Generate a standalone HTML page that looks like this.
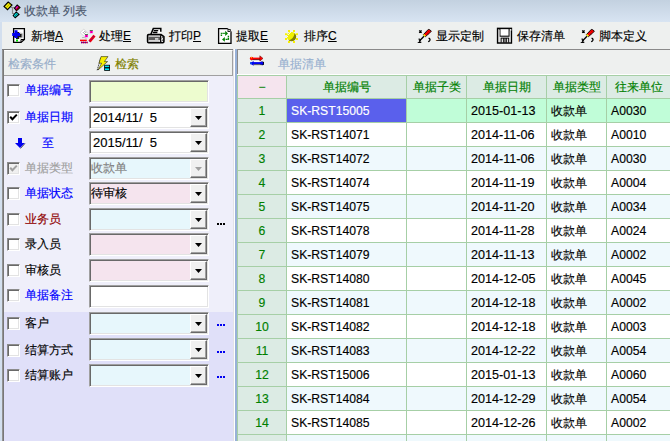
<!DOCTYPE html><html><head><meta charset="utf-8"><style>
*{margin:0;padding:0;box-sizing:border-box}
html,body{width:670px;height:441px;overflow:hidden;background:#F0F0F0;font-family:"Liberation Sans",sans-serif;font-size:12px;color:#000;font-weight:500;-webkit-text-stroke:0.15px currentColor}
.a{position:absolute;white-space:nowrap}
#title{left:0;top:0;width:670px;height:22px;background:linear-gradient(#C3D1E0,#D8E4F2)}
#title .t{left:24px;top:3px;font-size:12.4px;color:#4A566C;line-height:16px}
#frameL{left:0;top:22px;width:2px;height:419px;background:#D3DFEE}
#tb{left:2px;top:22px;width:668px;height:27px;background:#EEF0EF}
.tbt{top:29px;line-height:14px;font-size:12px;color:#000;font-weight:500;-webkit-text-stroke:0.15px currentColor}
.u{text-decoration:underline}
#lp{left:2px;top:49px;width:233px;height:392px;background:#EFEFFA}
#lpl{left:2px;top:49px;width:2px;height:392px;background:linear-gradient(90deg,#A0A0A0,#6A6A6A)}
#lpt{left:2px;top:49px;width:233px;height:1px;background:#7A7A7A}
#lhdr{left:4px;top:50px;width:229px;height:26px;background:#EEF0EF;border-top:1px solid #FFF;border-right:1px solid #A0A0A0;border-bottom:1px solid #A0A0A0}
#lower{left:4px;top:312px;width:229px;height:129px;background:#E0E0F9}
#split{left:235px;top:49px;width:2px;height:392px;background:#98B1D8}
#splitw{left:233px;top:49px;width:2px;height:392px;background:linear-gradient(90deg,#E2E2E8 50%,#FFF 50%)}
#rp{left:237px;top:49px;width:433px;height:392px;background:#EEF0EF}
#rpt{left:237px;top:49px;width:433px;height:1px;background:#8A8A8A}
#rpl{left:237px;top:49px;width:1px;height:25px;background:#8A8A8A}
#rpw{left:237px;top:74px;width:433px;height:1px;background:#FFF}
.lbl{left:25px;line-height:14px;font-size:12px}
.cb{left:7px;width:13px;height:13px;background:#FFF;border:1px solid;border-color:#8C8C8C #FFF #FFF #8C8C8C;box-shadow:inset 1px 1px 0 #696969,inset -1px -1px 0 #E3E3E3}
.box{left:89px;width:120px;height:23px;border:1px solid;border-color:#A0A0A0 #FFF #FFF #A0A0A0;box-shadow:inset 1px 1px 0 #696969,inset -1px -1px 0 #E3E3E3}
.box .v{position:absolute;left:3px;top:4px;line-height:14px;font-size:13px}
.box .v.c{left:1px;top:3px;font-size:12px}
.dd{position:absolute;right:1px;top:1px;width:17px;height:19px;background:#F0F0F0;border:1px solid;border-color:#FFF #696969 #696969 #FFF;box-shadow:inset -1px -1px 0 #A0A0A0}
.dd:after{content:"";position:absolute;left:4px;top:7px;width:7px;height:4px;background:#000;clip-path:polygon(0 0,100% 0,50% 100%)}
.dd.dis:after{background:#A0A0A0}
.dots{left:217px;width:9px;height:2px}
.dots i{position:absolute;top:0;width:2px;height:2px;background:#0000E0}
.g{position:absolute;background:#A6CFA6}
.cell{position:absolute;line-height:14px;font-size:12.2px;white-space:nowrap}
</style></head><body><div class="a" id="title"><div class="a t">收款单 列表</div></div>
<svg class="a" style="left:0;top:0" width="22" height="21" viewBox="0 0 22 21">
<path d="M10.5 7.5 H14.5 M12.5 7.5 V13.5 H14" fill="none" stroke="#8A8A8A" stroke-width="1.2"/>
<path d="M4 6.5 L8.2 2 L12 5 L7.5 9.7 Z" fill="#F8F000" stroke="#000" stroke-width="1.1"/>
<path d="M6 8 L10 3.6" stroke="#A8A000" stroke-width="1"/>
<path d="M14.5 8.2 L17.2 5 L20 7.5 L16.5 10.7 Z" fill="#F000D0" stroke="#000" stroke-width="1.1"/>
<path d="M16 10 L19 7" stroke="#900000" stroke-width="1.3"/>
<path d="M13.2 15.5 L16.2 12 L19 14.5 L15.2 17.7 Z" fill="#00E8E8" stroke="#000" stroke-width="1.1"/>
<path d="M14.5 16.5 L17.5 13.5" stroke="#008080" stroke-width="1"/>
</svg>
<div class="a" id="frameL"></div>
<div class="a" id="tb"></div>
<div class="a tbt" style="left:31px">新增<span class="u">A</span></div>
<div class="a tbt" style="left:99px">处理<span class="u">E</span></div>
<div class="a tbt" style="left:169px">打印<span class="u">P</span></div>
<div class="a tbt" style="left:236px">提取<span class="u">E</span></div>
<div class="a tbt" style="left:304px">排序<span class="u">C</span></div>
<div class="a tbt" style="left:436px">显示定制</div>
<div class="a tbt" style="left:517px">保存清单</div>
<div class="a tbt" style="left:599px">脚本定义</div>
<svg class="a" style="left:10px;top:27px" width="17" height="17" viewBox="0 0 17 17">
<path d="M3.6 1.6 H14.4 V12.5 L11 15.4 H3.6 Z" fill="#FFF" stroke="#000" stroke-width="1.3"/>
<path d="M11 15.4 V12.5 H14.4" fill="none" stroke="#000" stroke-width="1"/>
<path d="M10 6.5 Q12.5 6.5 12.5 8.5 Q12.5 10.5 10 10.5" fill="none" stroke="#C0C0C0" stroke-width="1.8"/>
<path d="M3 8 H11 M7 4.5 V11.5" stroke="#000" stroke-width="3.2" opacity="0.9" transform="translate(0.6,0.6)"/>
<path d="M2.2 7.5 H10 M6 3.2 V11" stroke="#0000F0" stroke-width="3"/>
<rect x="6" y="12.5" width="2" height="2" fill="#00E000"/>
</svg>
<svg class="a" style="left:79px;top:28px" width="18" height="17" viewBox="0 0 18 17">
<path d="M1 4.5 L4.8 1.2 L9.3 5.3 L5.5 8.7 Z" fill="#FFF" stroke="#D0D0D0" stroke-width="0.8"/>
<path d="M3.8 4 L5.8 6 M5.3 3 L7.3 5" stroke="#9A9A9A" stroke-width="0.9"/>
<path d="M3 9.6 Q5 9 7.5 10.3" fill="none" stroke="#B8B8B8" stroke-width="1"/>
<rect x="10.8" y="2.8" width="3" height="2.4" fill="#FF00E8"/><rect x="10.8" y="2" width="3" height="1" fill="#507050"/>
<rect x="11.8" y="3.5" width="1" height="1" fill="#E00000"/>
<rect x="5.9" y="6.8" width="3" height="2.4" fill="#FF00E8"/><rect x="5.9" y="6" width="3" height="1" fill="#507050"/>
<rect x="6.9" y="7.5" width="1" height="1" fill="#E00000"/>
<path d="M1 12.4 H7.8" stroke="#FF0000" stroke-width="1.5"/>
<path d="M2 14.5 H8.6" stroke="#E00030" stroke-width="1.4"/>
<path d="M2 14.5 H8.6" stroke="#5000A0" stroke-width="1.4" stroke-dasharray="1 1"/>
<path d="M10.5 13.5 L15.5 7.6" stroke="#FF0000" stroke-width="2.8"/>
<path d="M10.5 13.5 L15.5 7.6" stroke="#6000A0" stroke-width="1.2" stroke-dasharray="1 1"/>
</svg>
<svg class="a" style="left:146px;top:27px" width="20" height="18" viewBox="0 0 20 18">
<path d="M7.4 1.6 H14.8 V7 H5 Z" fill="#FFF"/>
<path d="M4.9 7.2 L7.3 1.6 H14.8 V4.8" fill="none" stroke="#000" stroke-width="1.5"/>
<path d="M7.7 3.6 H12.2 M6.9 5.5 H11.4" stroke="#000" stroke-width="1.4"/>
<path d="M2.6 7.6 H15 L17.9 9.6 V14.6 Q17.9 15.8 16.8 15.8 H2.6 Q1.6 15.8 1.6 14.6 V8.6 Q1.6 7.6 2.6 7.6 Z" fill="#E8E8E8" stroke="#000" stroke-width="1.6"/>
<rect x="2.4" y="9.8" width="12" height="3.2" fill="#5A5A5A"/>
<path d="M2.8 8.9 H13.5 M2.8 14.2 H13.5" stroke="#A8A8A8" stroke-width="0.9"/>
<rect x="9" y="11.3" width="3.4" height="1.3" fill="#FFF"/>
<path d="M14.6 8.2 V15.2" stroke="#000" stroke-width="1.1"/>
<path d="M15.4 11.2 L17.2 9.6 M15.4 14.2 L17.2 12.6" stroke="#303030" stroke-width="1"/>
</svg>
<svg class="a" style="left:217px;top:27px" width="16" height="18" viewBox="0 0 16 18">
<path d="M1.6 1.6 H10.6 L14 4.8 V16.4 H1.6 Z" fill="#FFF" stroke="#000" stroke-width="1.3"/>
<path d="M10.8 1.6 L14 4.8" stroke="#FFF" stroke-width="1.2"/>
<rect x="11" y="2.4" width="2.2" height="2.2" fill="#FFF" stroke="#000" stroke-width="0.8"/>
<path d="M4.4 9 V6.4 H8.6" fill="none" stroke="#008000" stroke-width="1.4" stroke-dasharray="1.6 0.6"/>
<path d="M8.2 3.8 L11 6.4 L8.2 9 Z" fill="#008000"/>
<path d="M11.4 8.8 V12.4 H7.4" fill="none" stroke="#008000" stroke-width="1.4" stroke-dasharray="1.6 0.6"/>
<path d="M7.8 10 L5 12.4 L7.8 14.8 Z" fill="#008000"/>
</svg>
<svg class="a" style="left:284px;top:28px" width="16" height="16" viewBox="0 0 16 16">
<g fill="#F8F000"><rect x="4" y="2" width="2" height="2"/><rect x="9" y="2" width="2" height="2"/><rect x="1" y="5.3" width="2" height="1.8"/><rect x="12" y="5.3" width="2" height="1.8"/><rect x="1" y="10" width="2" height="2"/><rect x="12" y="10" width="2" height="2"/><rect x="4" y="13" width="2" height="2"/><rect x="9" y="13" width="2" height="2"/></g>
<circle cx="7.5" cy="8.5" r="4.6" fill="#F0F000"/>
<path d="M10.6 5.2 A4.6 4.6 0 0 1 4.6 12.2 Q9.5 11.5 10.6 5.2 Z" fill="#808000"/>
<g fill="#FFFFFF" opacity="0.8"><rect x="4" y="6" width="1" height="1"/><rect x="5" y="5" width="1" height="1"/><rect x="6" y="4" width="1" height="1"/><rect x="3" y="8" width="1" height="1"/></g>
</svg>
<svg class="a" style="left:417px;top:28px" width="16" height="16" viewBox="0 0 16 16">
<path d="M7 8.2 L2.2 13.2" stroke="#000" stroke-width="1.3"/>
<path d="M1.5 11.2 Q3 10.8 3.3 12 Q3.2 13.5 1.8 14.5 Q3.5 14.6 4.3 13.8" fill="none" stroke="#000" stroke-width="1.1"/>
<path d="M6.4 6.6 L11.3 1.4 Q12.8 1.2 14.4 3.3 L8.3 8.8 Z" fill="#FF0000" stroke="#000" stroke-width="0.9"/>
<path d="M9.5 4.5 L11.6 6.2 M11 3 L13 4.7" stroke="#B00000" stroke-width="0.7"/>
<path d="M6.6 6.4 L8.4 8.3" stroke="#F0F000" stroke-width="1.5"/>
<path d="M2.2 2.5 L4.6 4.7 M4.6 2.5 L2.2 4.7" stroke="#000" stroke-width="1.3"/>
<path d="M11.6 10.2 Q13.6 11 12.8 12.3 Q12.2 13.2 11.2 13.8" fill="none" stroke="#000" stroke-width="1.3"/>
</svg>
<svg class="a" style="left:496px;top:27px" width="17" height="17" viewBox="0 0 17 17">
<rect x="1.6" y="1.4" width="13.8" height="14.6" fill="#FFF" stroke="#000" stroke-width="1.5"/>
<rect x="3.9" y="1.6" width="9.2" height="7.6" fill="#FFF" stroke="#000" stroke-width="1.1"/>
<rect x="4.6" y="10.6" width="8.6" height="5" fill="#000"/>
<rect x="5.6" y="11.6" width="1.6" height="3.6" fill="#E0E0E0"/><rect x="8.2" y="11.6" width="1.6" height="3.6" fill="#909090"/><rect x="10.8" y="11.6" width="1.4" height="3.6" fill="#E0E0E0"/>
<rect x="2.6" y="3" width="1" height="12" fill="#C8C8C8"/><rect x="13.8" y="4.2" width="1" height="11" fill="#C8C8C8"/>
<rect x="14" y="2.2" width="1.4" height="1.4" fill="#FFF"/>
</svg>
<svg class="a" style="left:580px;top:28px" width="16" height="16" viewBox="0 0 16 16">
<path d="M7 8.2 L2.2 13.2" stroke="#000" stroke-width="1.3"/>
<path d="M1.5 11.2 Q3 10.8 3.3 12 Q3.2 13.5 1.8 14.5 Q3.5 14.6 4.3 13.8" fill="none" stroke="#000" stroke-width="1.1"/>
<path d="M6.4 6.6 L11.3 1.4 Q12.8 1.2 14.4 3.3 L8.3 8.8 Z" fill="#FF0000" stroke="#000" stroke-width="0.9"/>
<path d="M9.5 4.5 L11.6 6.2 M11 3 L13 4.7" stroke="#B00000" stroke-width="0.7"/>
<path d="M6.6 6.4 L8.4 8.3" stroke="#F0F000" stroke-width="1.5"/>
<path d="M2.2 2.5 L4.6 4.7 M4.6 2.5 L2.2 4.7" stroke="#000" stroke-width="1.3"/>
<path d="M11.6 10.2 Q13.6 11 12.8 12.3 Q12.2 13.2 11.2 13.8" fill="none" stroke="#000" stroke-width="1.3"/>
</svg>
<div class="a" id="lp"></div>
<div class="a" id="lower"></div>
<div class="a" id="lpl"></div>
<div class="a" id="lpt"></div>
<div class="a" id="lhdr"></div>
<div class="a" style="left:8px;top:57px;line-height:14px;color:#98AECA">检索条件</div>
<svg class="a" style="left:96px;top:56px" width="14" height="15" viewBox="0 0 14 15">
<path d="M1.2 14.2 L4.6 2" stroke="#000" stroke-width="1" stroke-dasharray="1 1"/>
<path d="M5 0.6 H12 L8.4 5.6 H11.6 L2 14 L5.6 7.2 H3 Z" fill="#F8F000" stroke="#000" stroke-width="0.5"/>
<rect x="8.6" y="9.2" width="5" height="2.4" fill="#00E8F8" stroke="#000" stroke-width="0.8"/>
<rect x="8.6" y="12" width="5" height="2.4" fill="#00E8F8" stroke="#000" stroke-width="0.8"/>
</svg>
<div class="a" style="left:115px;top:57px;line-height:14px;color:#808000">检索</div>
<div class="a" id="splitw"></div>
<div class="a" id="split"></div>
<div class="a lbl" style="left:25px;top:83px;color:#0000FF">单据编号</div>
<div class="a cb" style="top:84px;background:#FFF"></div>
<div class="a box" style="top:80px;background:#EDFCCF"></div>
<div class="a lbl" style="left:25px;top:110px;color:#0000FF">单据日期</div>
<div class="a cb" style="top:111px;background:#FFF"><svg style="position:absolute;left:1px;top:1px" width="9" height="9" viewBox="0 0 9 9"><path d="M1.2 3.8 L3.4 6.2 L7.8 1.6" fill="none" stroke="#000" stroke-width="2"/></svg></div>
<div class="a box" style="top:106px;background:#FFFFFF"><div class="v" style="color:#000">2014/11/&nbsp; 5</div><div class="dd"></div></div>
<div class="a lbl" style="left:42px;top:136px;color:#0000FF">至</div>
<svg class="a" style="left:15px;top:137px" width="11" height="12" viewBox="0 0 11 12"><path d="M3 1 H7 V6 H10 L5 11 L0 6 H3 Z" fill="#0000F0"/><path d="M10 6.5 L5.5 11.5" stroke="#606060" stroke-width="1"/></svg>
<div class="a box" style="top:131px;background:#FFFFFF"><div class="v" style="color:#000">2015/11/&nbsp; 5</div><div class="dd"></div></div>
<div class="a lbl" style="left:25px;top:161px;color:#A0A0A0">单据类型</div>
<div class="a cb" style="top:162px;background:#F0F0F0"><svg style="position:absolute;left:1px;top:1px" width="9" height="9" viewBox="0 0 9 9"><path d="M1.2 3.8 L3.4 6.2 L7.8 1.6" fill="none" stroke="#A0A0A0" stroke-width="2"/></svg></div>
<div class="a box" style="top:157px;background:#E7F7FC"><div class="v c" style="color:#808080">收款单</div><div class="dd dis"></div></div>
<div class="a lbl" style="left:25px;top:186px;color:#0000FF">单据状态</div>
<div class="a cb" style="top:187px;background:#FFF"></div>
<div class="a box" style="top:182px;background:#F5E4EE"><div class="v c" style="color:#000">待审核</div><div class="dd"></div></div>
<div class="a lbl" style="left:25px;top:212px;color:#900000">业务员</div>
<div class="a cb" style="top:213px;background:#FFF"></div>
<div class="a box" style="top:208px;background:#E7F7FC"><div class="dd"></div></div>
<div class="a dots" style="top:223px"><i style="left:0;background:#000000"></i><i style="left:3px;background:#000000"></i><i style="left:6px;background:#000000"></i></div>
<div class="a lbl" style="left:25px;top:237px;color:#000000">录入员</div>
<div class="a cb" style="top:238px;background:#FFF"></div>
<div class="a box" style="top:233px;background:#F5E4EE"><div class="dd"></div></div>
<div class="a lbl" style="left:25px;top:263px;color:#000000">审核员</div>
<div class="a cb" style="top:264px;background:#FFF"></div>
<div class="a box" style="top:259px;background:#F5E4EE"><div class="dd"></div></div>
<div class="a lbl" style="left:25px;top:288px;color:#0000FF">单据备注</div>
<div class="a cb" style="top:289px;background:#FFF"></div>
<div class="a box" style="top:285px;background:#FFFFFF"></div>
<div class="a lbl" style="left:25px;top:316px;color:#000000">客户</div>
<div class="a cb" style="top:317px;background:#FFF"></div>
<div class="a box" style="top:312px;background:#E7F7FC"><div class="dd"></div></div>
<div class="a dots" style="top:324px"><i style="left:0;background:#0000F0"></i><i style="left:3px;background:#0000F0"></i><i style="left:6px;background:#0000F0"></i></div>
<div class="a lbl" style="left:25px;top:343px;color:#000000">结算方式</div>
<div class="a cb" style="top:344px;background:#FFF"></div>
<div class="a box" style="top:338px;background:#E7F7FC"><div class="dd"></div></div>
<div class="a dots" style="top:351px"><i style="left:0;background:#0000F0"></i><i style="left:3px;background:#0000F0"></i><i style="left:6px;background:#0000F0"></i></div>
<div class="a lbl" style="left:25px;top:368px;color:#000000">结算账户</div>
<div class="a cb" style="top:369px;background:#FFF"></div>
<div class="a box" style="top:364px;background:#E7F7FC"><div class="dd"></div></div>
<div class="a dots" style="top:376px"><i style="left:0;background:#0000F0"></i><i style="left:3px;background:#0000F0"></i><i style="left:6px;background:#0000F0"></i></div>
<div class="a" id="rp"></div>
<div class="a" id="rpt"></div>
<div class="a" id="rpl"></div>
<div class="a" id="rpw"></div>
<svg class="a" style="left:249px;top:55px" width="15" height="12" viewBox="0 0 15 12">
<rect x="2" y="4.2" width="10" height="1.2" fill="#000"/>
<rect x="2.5" y="5.3" width="9" height="1.4" fill="#FFF"/>
<rect x="1.2" y="2.6" width="11" height="1.8" fill="#FF0000"/>
<circle cx="2.6" cy="3.4" r="1.7" fill="#FF0000"/>
<rect x="2" y="2.2" width="1" height="1" fill="#F0F000"/>
<path d="M10.8 0.8 L14 3.4 L10.8 6 Z" fill="#FF0000" stroke="#600000" stroke-width="0.5"/>
<circle cx="13.4" cy="8.4" r="1.9" fill="#000"/>
<rect x="1.2" y="7.1" width="12" height="2.2" fill="#0000F0"/>
<circle cx="12.4" cy="8.2" r="1.8" fill="#0000F0"/>
<path d="M4.6 5.9 L1 8.2 L4.6 10.8 Z" fill="#0000F0"/>
<rect x="1.6" y="7.6" width="1" height="1" fill="#00E0F0"/>
<rect x="4.5" y="9.3" width="8" height="0.8" fill="#404040"/>
</svg>
<div class="a" style="left:278px;top:57px;line-height:14px;color:#98B0D0">单据清单</div>
<div class="a" style="left:238px;top:76px;width:432px;height:22px;background:#DCEBE4"></div>
<div class="a" style="left:238px;top:76px;width:48px;height:22px;background:#F5E4EE"></div>
<div class="a" style="left:238px;top:80px;width:48px;text-align:center;line-height:14px;color:#008000">−</div>
<div class="a" style="left:287px;top:80px;width:119px;text-align:center;line-height:14px;color:#008000">单据编号</div>
<div class="a" style="left:407px;top:80px;width:59px;text-align:center;line-height:14px;color:#008000">单据子类</div>
<div class="a" style="left:467px;top:80px;width:79px;text-align:center;line-height:14px;color:#008000">单据日期</div>
<div class="a" style="left:547px;top:80px;width:59px;text-align:center;line-height:14px;color:#008000">单据类型</div>
<div class="a" style="left:615px;top:80px;line-height:14px;color:#008000">往来单位</div>
<div class="a" style="left:238px;top:99px;width:48px;height:23px;background:#DCEBE4"></div>
<div class="a" style="left:287px;top:99px;width:383px;height:23px;background:#C0FDD8"></div>
<div class="a" style="left:287px;top:99px;width:119px;height:23px;background:#5A60EC"></div>
<div class="a cell" style="left:238px;top:104px;width:48px;text-align:center;color:#008000">1</div>
<div class="a cell" style="left:291px;top:104px;color:#FFF">SK-RST15005</div>
<div class="a cell" style="left:471px;top:104px;font-size:12.6px">2015-01-13</div>
<div class="a cell" style="left:551px;top:104px;font-size:12px">收款单</div>
<div class="a cell" style="left:611px;top:104px">A0030</div>
<div class="a" style="left:238px;top:123px;width:48px;height:23px;background:#DCEBE4"></div>
<div class="a" style="left:287px;top:123px;width:383px;height:23px;background:#FFFFFF"></div>
<div class="a cell" style="left:238px;top:128px;width:48px;text-align:center;color:#008000">2</div>
<div class="a cell" style="left:291px;top:128px;color:#000">SK-RST14071</div>
<div class="a cell" style="left:471px;top:128px;font-size:12.6px">2014-11-06</div>
<div class="a cell" style="left:551px;top:128px;font-size:12px">收款单</div>
<div class="a cell" style="left:611px;top:128px">A0010</div>
<div class="a" style="left:238px;top:147px;width:48px;height:23px;background:#DCEBE4"></div>
<div class="a" style="left:287px;top:147px;width:383px;height:23px;background:#EFF9FD"></div>
<div class="a cell" style="left:238px;top:152px;width:48px;text-align:center;color:#008000">3</div>
<div class="a cell" style="left:291px;top:152px;color:#000">SK-RST14072</div>
<div class="a cell" style="left:471px;top:152px;font-size:12.6px">2014-11-06</div>
<div class="a cell" style="left:551px;top:152px;font-size:12px">收款单</div>
<div class="a cell" style="left:611px;top:152px">A0030</div>
<div class="a" style="left:238px;top:171px;width:48px;height:23px;background:#DCEBE4"></div>
<div class="a" style="left:287px;top:171px;width:383px;height:23px;background:#FFFFFF"></div>
<div class="a cell" style="left:238px;top:176px;width:48px;text-align:center;color:#008000">4</div>
<div class="a cell" style="left:291px;top:176px;color:#000">SK-RST14074</div>
<div class="a cell" style="left:471px;top:176px;font-size:12.6px">2014-11-19</div>
<div class="a cell" style="left:551px;top:176px;font-size:12px">收款单</div>
<div class="a cell" style="left:611px;top:176px">A0004</div>
<div class="a" style="left:238px;top:195px;width:48px;height:23px;background:#DCEBE4"></div>
<div class="a" style="left:287px;top:195px;width:383px;height:23px;background:#EFF9FD"></div>
<div class="a cell" style="left:238px;top:200px;width:48px;text-align:center;color:#008000">5</div>
<div class="a cell" style="left:291px;top:200px;color:#000">SK-RST14075</div>
<div class="a cell" style="left:471px;top:200px;font-size:12.6px">2014-11-20</div>
<div class="a cell" style="left:551px;top:200px;font-size:12px">收款单</div>
<div class="a cell" style="left:611px;top:200px">A0034</div>
<div class="a" style="left:238px;top:219px;width:48px;height:23px;background:#DCEBE4"></div>
<div class="a" style="left:287px;top:219px;width:383px;height:23px;background:#FFFFFF"></div>
<div class="a cell" style="left:238px;top:224px;width:48px;text-align:center;color:#008000">6</div>
<div class="a cell" style="left:291px;top:224px;color:#000">SK-RST14078</div>
<div class="a cell" style="left:471px;top:224px;font-size:12.6px">2014-11-28</div>
<div class="a cell" style="left:551px;top:224px;font-size:12px">收款单</div>
<div class="a cell" style="left:611px;top:224px">A0024</div>
<div class="a" style="left:238px;top:243px;width:48px;height:23px;background:#DCEBE4"></div>
<div class="a" style="left:287px;top:243px;width:383px;height:23px;background:#EFF9FD"></div>
<div class="a cell" style="left:238px;top:248px;width:48px;text-align:center;color:#008000">7</div>
<div class="a cell" style="left:291px;top:248px;color:#000">SK-RST14079</div>
<div class="a cell" style="left:471px;top:248px;font-size:12.6px">2014-11-13</div>
<div class="a cell" style="left:551px;top:248px;font-size:12px">收款单</div>
<div class="a cell" style="left:611px;top:248px">A0002</div>
<div class="a" style="left:238px;top:267px;width:48px;height:23px;background:#DCEBE4"></div>
<div class="a" style="left:287px;top:267px;width:383px;height:23px;background:#FFFFFF"></div>
<div class="a cell" style="left:238px;top:272px;width:48px;text-align:center;color:#008000">8</div>
<div class="a cell" style="left:291px;top:272px;color:#000">SK-RST14080</div>
<div class="a cell" style="left:471px;top:272px;font-size:12.6px">2014-12-05</div>
<div class="a cell" style="left:551px;top:272px;font-size:12px">收款单</div>
<div class="a cell" style="left:611px;top:272px">A0045</div>
<div class="a" style="left:238px;top:291px;width:48px;height:23px;background:#DCEBE4"></div>
<div class="a" style="left:287px;top:291px;width:383px;height:23px;background:#EFF9FD"></div>
<div class="a cell" style="left:238px;top:296px;width:48px;text-align:center;color:#008000">9</div>
<div class="a cell" style="left:291px;top:296px;color:#000">SK-RST14081</div>
<div class="a cell" style="left:471px;top:296px;font-size:12.6px">2014-12-18</div>
<div class="a cell" style="left:551px;top:296px;font-size:12px">收款单</div>
<div class="a cell" style="left:611px;top:296px">A0002</div>
<div class="a" style="left:238px;top:315px;width:48px;height:23px;background:#DCEBE4"></div>
<div class="a" style="left:287px;top:315px;width:383px;height:23px;background:#FFFFFF"></div>
<div class="a cell" style="left:238px;top:320px;width:48px;text-align:center;color:#008000">10</div>
<div class="a cell" style="left:291px;top:320px;color:#000">SK-RST14082</div>
<div class="a cell" style="left:471px;top:320px;font-size:12.6px">2014-12-18</div>
<div class="a cell" style="left:551px;top:320px;font-size:12px">收款单</div>
<div class="a cell" style="left:611px;top:320px">A0003</div>
<div class="a" style="left:238px;top:339px;width:48px;height:23px;background:#DCEBE4"></div>
<div class="a" style="left:287px;top:339px;width:383px;height:23px;background:#EFF9FD"></div>
<div class="a cell" style="left:238px;top:344px;width:48px;text-align:center;color:#008000">11</div>
<div class="a cell" style="left:291px;top:344px;color:#000">SK-RST14083</div>
<div class="a cell" style="left:471px;top:344px;font-size:12.6px">2014-12-22</div>
<div class="a cell" style="left:551px;top:344px;font-size:12px">收款单</div>
<div class="a cell" style="left:611px;top:344px">A0054</div>
<div class="a" style="left:238px;top:363px;width:48px;height:23px;background:#DCEBE4"></div>
<div class="a" style="left:287px;top:363px;width:383px;height:23px;background:#FFFFFF"></div>
<div class="a cell" style="left:238px;top:368px;width:48px;text-align:center;color:#008000">12</div>
<div class="a cell" style="left:291px;top:368px;color:#000">SK-RST15006</div>
<div class="a cell" style="left:471px;top:368px;font-size:12.6px">2015-01-13</div>
<div class="a cell" style="left:551px;top:368px;font-size:12px">收款单</div>
<div class="a cell" style="left:611px;top:368px">A0060</div>
<div class="a" style="left:238px;top:387px;width:48px;height:23px;background:#DCEBE4"></div>
<div class="a" style="left:287px;top:387px;width:383px;height:23px;background:#EFF9FD"></div>
<div class="a cell" style="left:238px;top:392px;width:48px;text-align:center;color:#008000">13</div>
<div class="a cell" style="left:291px;top:392px;color:#000">SK-RST14084</div>
<div class="a cell" style="left:471px;top:392px;font-size:12.6px">2014-12-29</div>
<div class="a cell" style="left:551px;top:392px;font-size:12px">收款单</div>
<div class="a cell" style="left:611px;top:392px">A0054</div>
<div class="a" style="left:238px;top:411px;width:48px;height:23px;background:#DCEBE4"></div>
<div class="a" style="left:287px;top:411px;width:383px;height:23px;background:#FFFFFF"></div>
<div class="a cell" style="left:238px;top:416px;width:48px;text-align:center;color:#008000">14</div>
<div class="a cell" style="left:291px;top:416px;color:#000">SK-RST14085</div>
<div class="a cell" style="left:471px;top:416px;font-size:12.6px">2014-12-26</div>
<div class="a cell" style="left:551px;top:416px;font-size:12px">收款单</div>
<div class="a cell" style="left:611px;top:416px">A0002</div>
<div class="a" style="left:238px;top:435px;width:48px;height:10px;background:#DCEBE4"></div>
<div class="a" style="left:287px;top:435px;width:383px;height:10px;background:#EFF9FD"></div>
<div class="g" style="left:237px;top:75px;width:1px;height:366px"></div>
<div class="g" style="left:286px;top:75px;width:1px;height:366px"></div>
<div class="g" style="left:406px;top:75px;width:1px;height:366px"></div>
<div class="g" style="left:466px;top:75px;width:1px;height:366px"></div>
<div class="g" style="left:546px;top:75px;width:1px;height:366px"></div>
<div class="g" style="left:606px;top:75px;width:1px;height:366px"></div>
<div class="g" style="left:237px;top:75px;width:433px;height:1px"></div>
<div class="g" style="left:237px;top:98px;width:433px;height:1px"></div>
<div class="g" style="left:237px;top:122px;width:433px;height:1px"></div>
<div class="g" style="left:237px;top:146px;width:433px;height:1px"></div>
<div class="g" style="left:237px;top:170px;width:433px;height:1px"></div>
<div class="g" style="left:237px;top:194px;width:433px;height:1px"></div>
<div class="g" style="left:237px;top:218px;width:433px;height:1px"></div>
<div class="g" style="left:237px;top:242px;width:433px;height:1px"></div>
<div class="g" style="left:237px;top:266px;width:433px;height:1px"></div>
<div class="g" style="left:237px;top:290px;width:433px;height:1px"></div>
<div class="g" style="left:237px;top:314px;width:433px;height:1px"></div>
<div class="g" style="left:237px;top:338px;width:433px;height:1px"></div>
<div class="g" style="left:237px;top:362px;width:433px;height:1px"></div>
<div class="g" style="left:237px;top:386px;width:433px;height:1px"></div>
<div class="g" style="left:237px;top:410px;width:433px;height:1px"></div>
<div class="g" style="left:237px;top:434px;width:433px;height:1px"></div></body></html>
